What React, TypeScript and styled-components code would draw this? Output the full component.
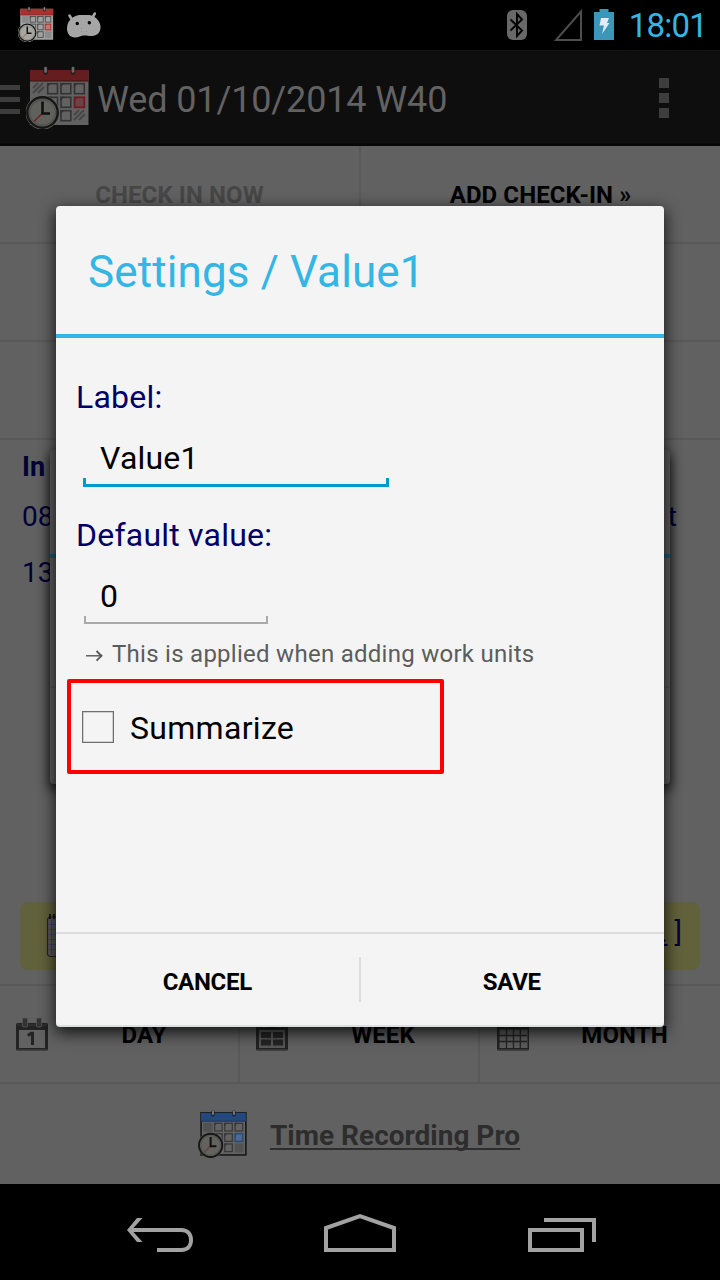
import React from "react";
import styled, { createGlobalStyle } from "styled-components";

const GlobalStyle = createGlobalStyle`
  * { box-sizing: border-box; }
  body { margin: 0; background: #000; font-family: Roboto, "Liberation Sans", sans-serif; }
  svg { display: block; flex: none; }
`;

const Screen = styled.div`
  position: relative;
  width: 720px;
  height: 1280px;
  overflow: hidden;
  display: flex;
  flex-direction: column;
  background: #000;
`;

const StatusBar = styled.header`
  height: 50px;
  flex: none;
  display: flex;
  justify-content: space-between;
  padding: 0 13px 0 18px;
`;

const StatusGroup = styled.div<{ $gap: number }>`
  display: flex;
  align-items: flex-start;
  gap: ${(p) => p.$gap}px;
`;

const Offset = styled.div<{ $top: number; $left?: number }>`
  padding-top: ${(p) => p.$top}px;
  padding-left: ${(p) => p.$left ?? 0}px;
`;

const Clock = styled.span`
  padding: 7px 0 0 15px;
  line-height: 38px;
  font-size: 33px;
  letter-spacing: -0.8px;
  color: #33b5e5;
`;

const ActionBar = styled.div`
  height: 96px;
  flex: none;
  display: flex;
  align-items: center;
  background: #0e0e0e;
  border-top: 1px solid #141414;
  border-bottom: 3px solid #070707;
`;

const Drawer = styled.div`
  width: 20px;
  display: flex;
  flex-direction: column;
  gap: 7px;
  padding-top: 4px;
`;

const DrawerLine = styled.i`
  height: 5px;
  background: #3d3d3d;
`;

const Title = styled.h1`
  flex: 1;
  margin: 0;
  padding: 6px 0 0 7px;
  font-weight: 400;
  font-size: 36px;
  line-height: 42px;
  letter-spacing: -0.13px;
  color: #626262;
`;

const Overflow = styled.div`
  display: flex;
  flex-direction: column;
  gap: 5px;
  margin: 1px 51px 0 0;
`;

const Dot = styled.i`
  width: 10px;
  height: 10px;
  background: #3d3d3d;
`;

const Page = styled.main`
  height: 1038px;
  flex: none;
  display: flex;
  flex-direction: column;
  background: #616161;
`;

const Row = styled.div`
  height: 98px;
  flex: none;
  display: flex;
  border-bottom: 2px solid #595959;
`;

const Cell = styled.div<{ $muted?: boolean }>`
  flex: 1;
  display: flex;
  align-items: center;
  justify-content: center;
  padding-top: 2px;
  font-size: 24px;
  font-weight: 700;
  letter-spacing: 0.1px;
  color: ${(p) => (p.$muted ? "#464646" : "#000")};
  & + & { border-left: 2px solid #595959; }
`;

const Tab = styled.div`
  flex: 0 0 240px;
  display: flex;
  align-items: center;
  padding-left: 16px;
  border-right: 2px solid #595959;
  &:last-child { border-right: 0; padding-left: 17px; }
`;

const TabLabel = styled.span<{ $shift: number }>`
  flex: 1;
  text-align: center;
  padding-top: 2px;
  padding-left: ${(p) => p.$shift}px;
  font-size: 24px;
  font-weight: 700;
  letter-spacing: 0.1px;
  color: #000;
`;

const Records = styled.section`
  height: 546px;
  flex: none;
  border-bottom: 2px solid #595959;
  padding: 10px 20px 0;
  display: flex;
  flex-direction: column;
  color: #000037;
  font-size: 28px;
  line-height: 34px;
`;

const RecordHead = styled.strong`
  padding-left: 2px;
  font-size: 27px;
`;

const Record = styled.div<{ $gap: number }>`
  display: flex;
  justify-content: space-between;
  margin-top: ${(p) => p.$gap}px;
  padding: 0 23px 0 2px;
`;

const Note = styled.div`
  height: 68px;
  margin: auto 0 14px;
  border-radius: 8px;
  background: #61613b;
  display: flex;
  justify-content: space-between;
  padding: 12px 18px 0 26px;
`;

const NoteEnd = styled.span`
  padding-top: 2px;
  font-size: 28px;
  line-height: 34px;
  white-space: pre;
`;

const Footer = styled.footer`
  flex: 1;
  display: flex;
  align-items: center;
  padding-left: 198px;
  gap: 23px;
`;

const FooterIcon = styled.span`
  padding-bottom: 2px;
`;

const FooterLink = styled.a`
  padding-top: 2px;
  font-size: 28px;
  font-weight: 700;
  color: #2d2d2d;
  text-decoration: underline;
  text-decoration-thickness: 2px;
  text-underline-offset: 3px;
  text-decoration-skip-ink: none;
`;

const NavBar = styled.nav`
  flex: 1;
  display: flex;
  gap: 129px;
  padding: 28px 0 0 125px;
`;

const BackDialog = styled.div`
  position: absolute;
  left: 50px;
  top: 450px;
  width: 620px;
  height: 334px;
  border-radius: 4px;
  background: #5f5f5f;
  box-shadow: 0 5px 12px 1px rgba(0, 0, 0, 0.75);
`;

const BackDialogTitle = styled.div`
  height: 108px;
  border-bottom: 4px solid #1a5e77;
`;

const BackDialogBody = styled.div`
  height: 130px;
  border-bottom: 2px solid #565656;
`;

const Dialog = styled.div`
  position: absolute;
  left: 56px;
  top: 206px;
  width: 608px;
  height: 821px;
  border-radius: 4px;
  background: #f4f4f4;
  border-bottom: 2px solid #dcdfdf;
  box-shadow: 0 5px 16px 1px rgba(0, 0, 0, 0.8);
  display: flex;
  flex-direction: column;
`;

const DialogTitle = styled.h2`
  height: 132px;
  flex: none;
  margin: 0;
  padding: 40px 0 0 32px;
  border-bottom: 4px solid #33b5e5;
  font-size: 44px;
  line-height: 52px;
  letter-spacing: 0.12px;
  font-weight: 400;
  color: #33b5e5;
`;

const DialogBody = styled.div`
  flex: 1;
  display: flex;
  flex-direction: column;
  align-items: flex-start;
  padding: 40px 0 0 11px;
  font-size: 32px;
  line-height: 38px;
  letter-spacing: 0.22px;
`;

const Label = styled.label`
  padding-left: 9px;
  height: 38px;
  color: #000066;
`;

const Field = styled.div<{ $width: number; $active?: boolean }>`
  width: ${(p) => p.$width}px;
  margin: ${(p) => (p.$active ? "23px 0 29px 16px" : "23px 0 16px 17px")};
  padding-left: ${(p) => (p.$active ? 17 : 16)}px;
  height: ${(p) => (p.$active ? 48 : 47)}px;
  color: #000;
  --line: ${(p) => (p.$active ? "#0099cc" : "#aaaaaa")};
  --size: ${(p) => (p.$active ? "3px" : "2px")};
  --tick: ${(p) => (p.$active ? "9px" : "8px")};
  background:
    linear-gradient(var(--line), var(--line)) left bottom / 100% var(--size) no-repeat,
    linear-gradient(var(--line), var(--line)) left bottom / var(--size) var(--tick) no-repeat,
    linear-gradient(var(--line), var(--line)) right bottom / var(--size) var(--tick) no-repeat;
`;

const Hint = styled.p`
  margin: 0 0 11px;
  padding-left: 17px;
  height: 28px;
  display: flex;
  gap: 8px;
  font-size: 24px;
  line-height: 28px;
  letter-spacing: 0.27px;
  color: #5c5c5c;
`;

const CheckRow = styled.div`
  width: 377px;
  height: 95px;
  border: 4px solid #ff0000;
  border-radius: 2px;
  padding: 0 0 0 11px;
  display: flex;
  align-items: center;
  gap: 16px;
  color: #000;
`;

const CheckLabel = styled.span`
  padding-top: 2px;
  letter-spacing: 0.3px;
`;

const CheckBox = styled.span`
  width: 32px;
  height: 32px;
  border: 1px solid #707070;
  box-shadow: inset 0 0 0 0.5px #aaa;
`;

const Buttons = styled.div`
  height: 93px;
  flex: none;
  display: flex;
  align-items: center;
  border-top: 2px solid #dcdcdc;
`;

const Button = styled.button`
  flex: 1;
  height: 45px;
  border: 0;
  padding: 4px 0 0;
  background: none;
  font: 700 24px/28px Roboto, "Liberation Sans", sans-serif;
  letter-spacing: -0.3px;
  color: #000;
  & + & { border-left: 2px solid #dcdcdc; padding-right: 1px; }
`;

type CalendarProps = {
  size: number;
  accent: string;
  body: string;
  ink: string;
  face: string;
  mark: string;
  hand: string;
  fill: string;
  shade: string;
  ring: string;
  outline?: string;
  hatched?: boolean;
};

function CalendarIcon(p: CalendarProps) {
  const cells = [[21, 18], [34.3, 18], [47.8, 18], [21, 31.6], [34.3, 31.6], [34.3, 45]];
  return (
    <svg width={p.size} height={p.size} viewBox="0 0 64 64">
      <rect x="4" y="5" width="58.5" height="55" fill={p.body} stroke={p.outline} strokeWidth={p.outline ? 2.2 : 0} />
      <rect x="4" y="5" width="58.5" height="11.500" fill={p.accent} />
      <path d="M4 16H62.5" stroke="#000" strokeOpacity=".35" />
      {[19.6, 47].map((x) => (
        <g key={x}>
          <rect x={x - 2.4} y="1.6" width="4.8" height="8.2" rx="2.2" fill="#1c1c1c" fillOpacity=".75" />
          <rect x={x - 1.3} y="1.8" width="2.6" height="6" rx="1.3" fill={p.ring} />
        </g>
      ))}
      {p.hatched ? (
        <g stroke={p.shade} strokeWidth="2.200">
          <path d="M7 23l5-5M7 28l10-10M12 28l6-6" />
          <path d="M48 50l5-5M48 55l10-10M53 55l6-6" />
        </g>
      ) : (
        <g fill={p.shade}>
          <rect x="7" y="18" width="12" height="12" />
          <rect x="48" y="45" width="11.500" height="12" />
        </g>
      )}
      {cells.map(([x, y]) => (
        <g key={`${x}-${y}`}>
          <rect x={x + 0.7} y={y + 0.7} width="9.8" height="10" fill="none" stroke={p.ink} strokeWidth="1.6" />
          <path d={`M${x} ${y}h4.500l-4.500 4.500z`} fill={p.ink} />
        </g>
      ))}
      <rect x="48.5" y="32.3" width="9.8" height="10" fill={p.fill} stroke={p.mark} strokeWidth="1.8" />
      <path d="M48 32h4l-4 4z" fill={p.mark} />
      <circle cx="16.5" cy="47.5" r="17" fill={p.body} />
      <circle cx="16.5" cy="47.5" r="15.2" fill={p.face} stroke="#161616" strokeWidth="2.4" />
      <circle cx="16.5" cy="47.5" r="12.8" fill="none" stroke="#000" strokeOpacity=".15" strokeWidth="1.4" />
      <path d="M16.500 48L8 56.500" stroke={p.hand} strokeWidth="1.4" />
      <path d="M16.500 36.500V48.500H24" fill="none" stroke="#111" strokeWidth="2.600" />
    </svg>
  );
}

const AndroidHead = () => (
  <svg width="36" height="28" viewBox="0 0 36 28">
    <path d="M3.500 4.500l3 5M28.800 2.500L26 7.500" stroke="#a6a6a6" strokeWidth="2.600" strokeLinecap="round" />
    <path d="M6 7C10 3.500 15 4 18 4s8-.8 12 3c3 3 5 6 4.500 10-.5 6-5 8-9 8-3 0-4.500-.6-7.500-.6S13 26.500 9 26.500c-5 0-8-4-8-9 0-5 2-8 5-10.500z" fill="#a6a6a6" />
    <circle cx="11.300" cy="12.500" r="1.700" fill="#000" />
    <circle cx="23.300" cy="11.700" r="1.700" fill="#000" />
    <path d="M15 17.500h1M15 20.500h1M20 20.500h1" stroke="#8c8c8c" />
  </svg>
);

const BluetoothIcon = () => (
  <svg width="20" height="30" viewBox="0 0 20 30">
    <rect width="20" height="30" rx="6" fill="#686868" />
    <path d="M3.500 9.500L15 20.500 10 26V4l5 5.500L3.500 20.500" fill="none" stroke="#000" strokeWidth="1.900" />
  </svg>
);

const SignalIcon = () => (
  <svg width="28" height="32" viewBox="0 0 28 32">
    <path d="M2 31H27V2.500z" fill="none" stroke="#4d4d4d" strokeWidth="2" />
  </svg>
);

const BatteryIcon = () => (
  <svg width="20" height="31" viewBox="0 0 20 31">
    <path d="M0 3h5.500V0h9v3H20v28H0z" fill="#3b96ba" />
    <path d="M7 9h8l-2 5h2.500L8 25l2-8.500H5.500z" fill="#e0eef3" />
  </svg>
);

function TabIcon({ kind }: { kind: "day" | "week" | "month" }) {
  return (
    <svg width="32" height="33" viewBox="0 0 32 33">
      <rect y="5" width="32" height="27.500" rx="1.500" fill="#232323" />
      <path d="M1 7h30M1 31.500h30" stroke="#363636" />
      {[9, 23].map((x) => (
        <rect key={x} x={x - 2.500} y="0" width="5" height="9" rx="1" fill="#333" stroke="#555" strokeWidth=".8" />
      ))}
      {kind === "day" && (
        <>
          <rect x="3" y="12" width="26" height="18" fill="#626262" />
          <path d="M11.800 17.500l3.500-2.300h1.200V27" fill="none" stroke="#232323" strokeWidth="3" />
        </>
      )}
      {kind === "week" && (
        <>
          <rect x="3" y="12" width="26" height="18" fill="#575757" />
          {[[5, 14], [17, 14], [5, 21.500], [17, 21.500]].map(([x, y]) => (
            <rect key={`${x}${y}`} x={x} y={y} width="10" height="6" rx=".5" fill="#242424" />
          ))}
        </>
      )}
      {kind === "month" && (
        <>
          <rect x="2.500" y="11.500" width="28" height="18.500" fill="#5d5d5d" />
          <path d="M9.500 11v19M16.500 11v19M23.300 11v19M2 17.500h28M2 23.500h28" stroke="#232323" strokeWidth="1.300" />
        </>
      )}
    </svg>
  );
}

const NotepadIcon = () => (
  <svg width="36" height="44" viewBox="0 0 36 44">
    <rect x="1.500" y="3" width="34" height="39.500" rx="3" fill="#5a5a5a" stroke="#252525" strokeWidth="1.200" />
    <path d="M2 10.500h32M2 15.500h32M2 20.500h32M2 25.500h32M2 30.500h32M2 35.500h32" stroke="#44446a" />
    <path d="M5.500 6v35" stroke="#713442" />
    <path d="M4 0v5M8 0v5M12 0v5M16 0v5M20 0v5M24 0v5M28 0v5M32 0v5" stroke="#111" strokeWidth="1.800" />
  </svg>
);

const ArrowIcon = () => (
  <svg width="20" height="28" viewBox="0 0 20 28">
    <path d="M2 15.800H17" fill="none" stroke="#555" strokeWidth="1.400" />
    <path d="M12.500 11L17.500 15.800l-5 4.800" fill="none" stroke="#555" strokeWidth="1.800" />
  </svg>
);

const BackIcon = () => (
  <svg width="70" height="46" viewBox="0 0 70 46">
    <path d="M12 6h5.500L8.500 16H56c8 0 12 5 12 12s-4 12-12 12H32v-4h24c5.500 0 8-3 8-8s-2.500-8-8-8H8.500l9 10H12L2 18z" fill="#a2a2a2" />
  </svg>
);

const HomeIcon = () => (
  <svg width="72" height="46" viewBox="0 0 72 46">
    <path d="M2 38V16L36 4.200 70 16v22z" fill="none" stroke="#a2a2a2" strokeWidth="4" />
  </svg>
);

const RecentIcon = () => (
  <svg width="72" height="46" viewBox="-3 0 72 46">
    <path d="M2 18H54V38H2zM16 8H66V30" fill="none" stroke="#a2a2a2" strokeWidth="4" />
  </svg>
);

export default function App() {
  return (
    <Screen>
      <GlobalStyle />
      <StatusBar>
        <StatusGroup $gap={12}>
          <Offset $top={6}>
            <CalendarIcon size={36} accent="#a83230" body="#a2a2a2" ink="#4e4e4e" face="#a6a6a0" mark="#b52a2c" hand="#b34a48" fill="#c47876" shade="#8c8c8c" ring="#8a8a8a" />
          </Offset>
          <Offset $top={11}>
            <AndroidHead />
          </Offset>
        </StatusGroup>
        <StatusGroup $gap={0}>
          <Offset $top={10}><BluetoothIcon /></Offset>
          <Offset $top={9} $left={27}><SignalIcon /></Offset>
          <Offset $top={9} $left={12}><BatteryIcon /></Offset>
          <Clock>18:01</Clock>
        </StatusGroup>
      </StatusBar>
      <ActionBar>
        <Drawer>
          <DrawerLine />
          <DrawerLine />
          <DrawerLine />
        </Drawer>
        <Offset $top={0} $left={6}>
          <CalendarIcon size={64} accent="#651d1e" body="#626262" ink="#333" face="#60605c" mark="#711a20" hand="#6b2222" fill="#6b4245" shade="#474747" ring="#6a6a6a" hatched />
        </Offset>
        <Title>Wed 01/10/2014 W40</Title>
        <Overflow>
          <Dot />
          <Dot />
          <Dot />
        </Overflow>
      </ActionBar>
      <Page>
        <Row>
          <Cell $muted>CHECK IN NOW</Cell>
          <Cell>ADD CHECK-IN »</Cell>
        </Row>
        <Row />
        <Row />
        <Records>
          <RecordHead>In</RecordHead>
          <Record $gap={16}>
            <span>08</span>
            <span>t</span>
          </Record>
          <Record $gap={22}>
            <span>13</span>
          </Record>
          <Note>
            <NotepadIcon />
            <NoteEnd><u>..</u> ]</NoteEnd>
          </Note>
        </Records>
        <Row>
          <Tab>
            <TabIcon kind="day" />
            <TabLabel $shift={2}>DAY</TabLabel>
          </Tab>
          <Tab>
            <TabIcon kind="week" />
            <TabLabel $shift={0}>WEEK</TabLabel>
          </Tab>
          <Tab>
            <TabIcon kind="month" />
            <TabLabel $shift={0}>MONTH</TabLabel>
          </Tab>
        </Row>
        <Footer>
          <FooterIcon>
            <CalendarIcon size={49} accent="#24477e" body="#636363" ink="#383838" face="#62625e" mark="#244a7c" hand="#743c3c" fill="#4e6a92" shade="#525252" ring="#777" outline="#1b1b1b" />
          </FooterIcon>
          <FooterLink>Time Recording Pro</FooterLink>
        </Footer>
      </Page>
      <NavBar>
        <BackIcon />
        <HomeIcon />
        <RecentIcon />
      </NavBar>
      <BackDialog>
        <BackDialogTitle />
        <BackDialogBody />
      </BackDialog>
      <Dialog>
        <DialogTitle>Settings / Value1</DialogTitle>
        <DialogBody>
          <Label>Label:</Label>
          <Field $width={306} $active>Value1</Field>
          <Label>Default value:</Label>
          <Field $width={184}>0</Field>
          <Hint>
            <ArrowIcon />
            This is applied when adding work units
          </Hint>
          <CheckRow>
            <CheckBox />
            <CheckLabel>Summarize</CheckLabel>
          </CheckRow>
        </DialogBody>
        <Buttons>
          <Button>CANCEL</Button>
          <Button>SAVE</Button>
        </Buttons>
      </Dialog>
    </Screen>
  );
}
